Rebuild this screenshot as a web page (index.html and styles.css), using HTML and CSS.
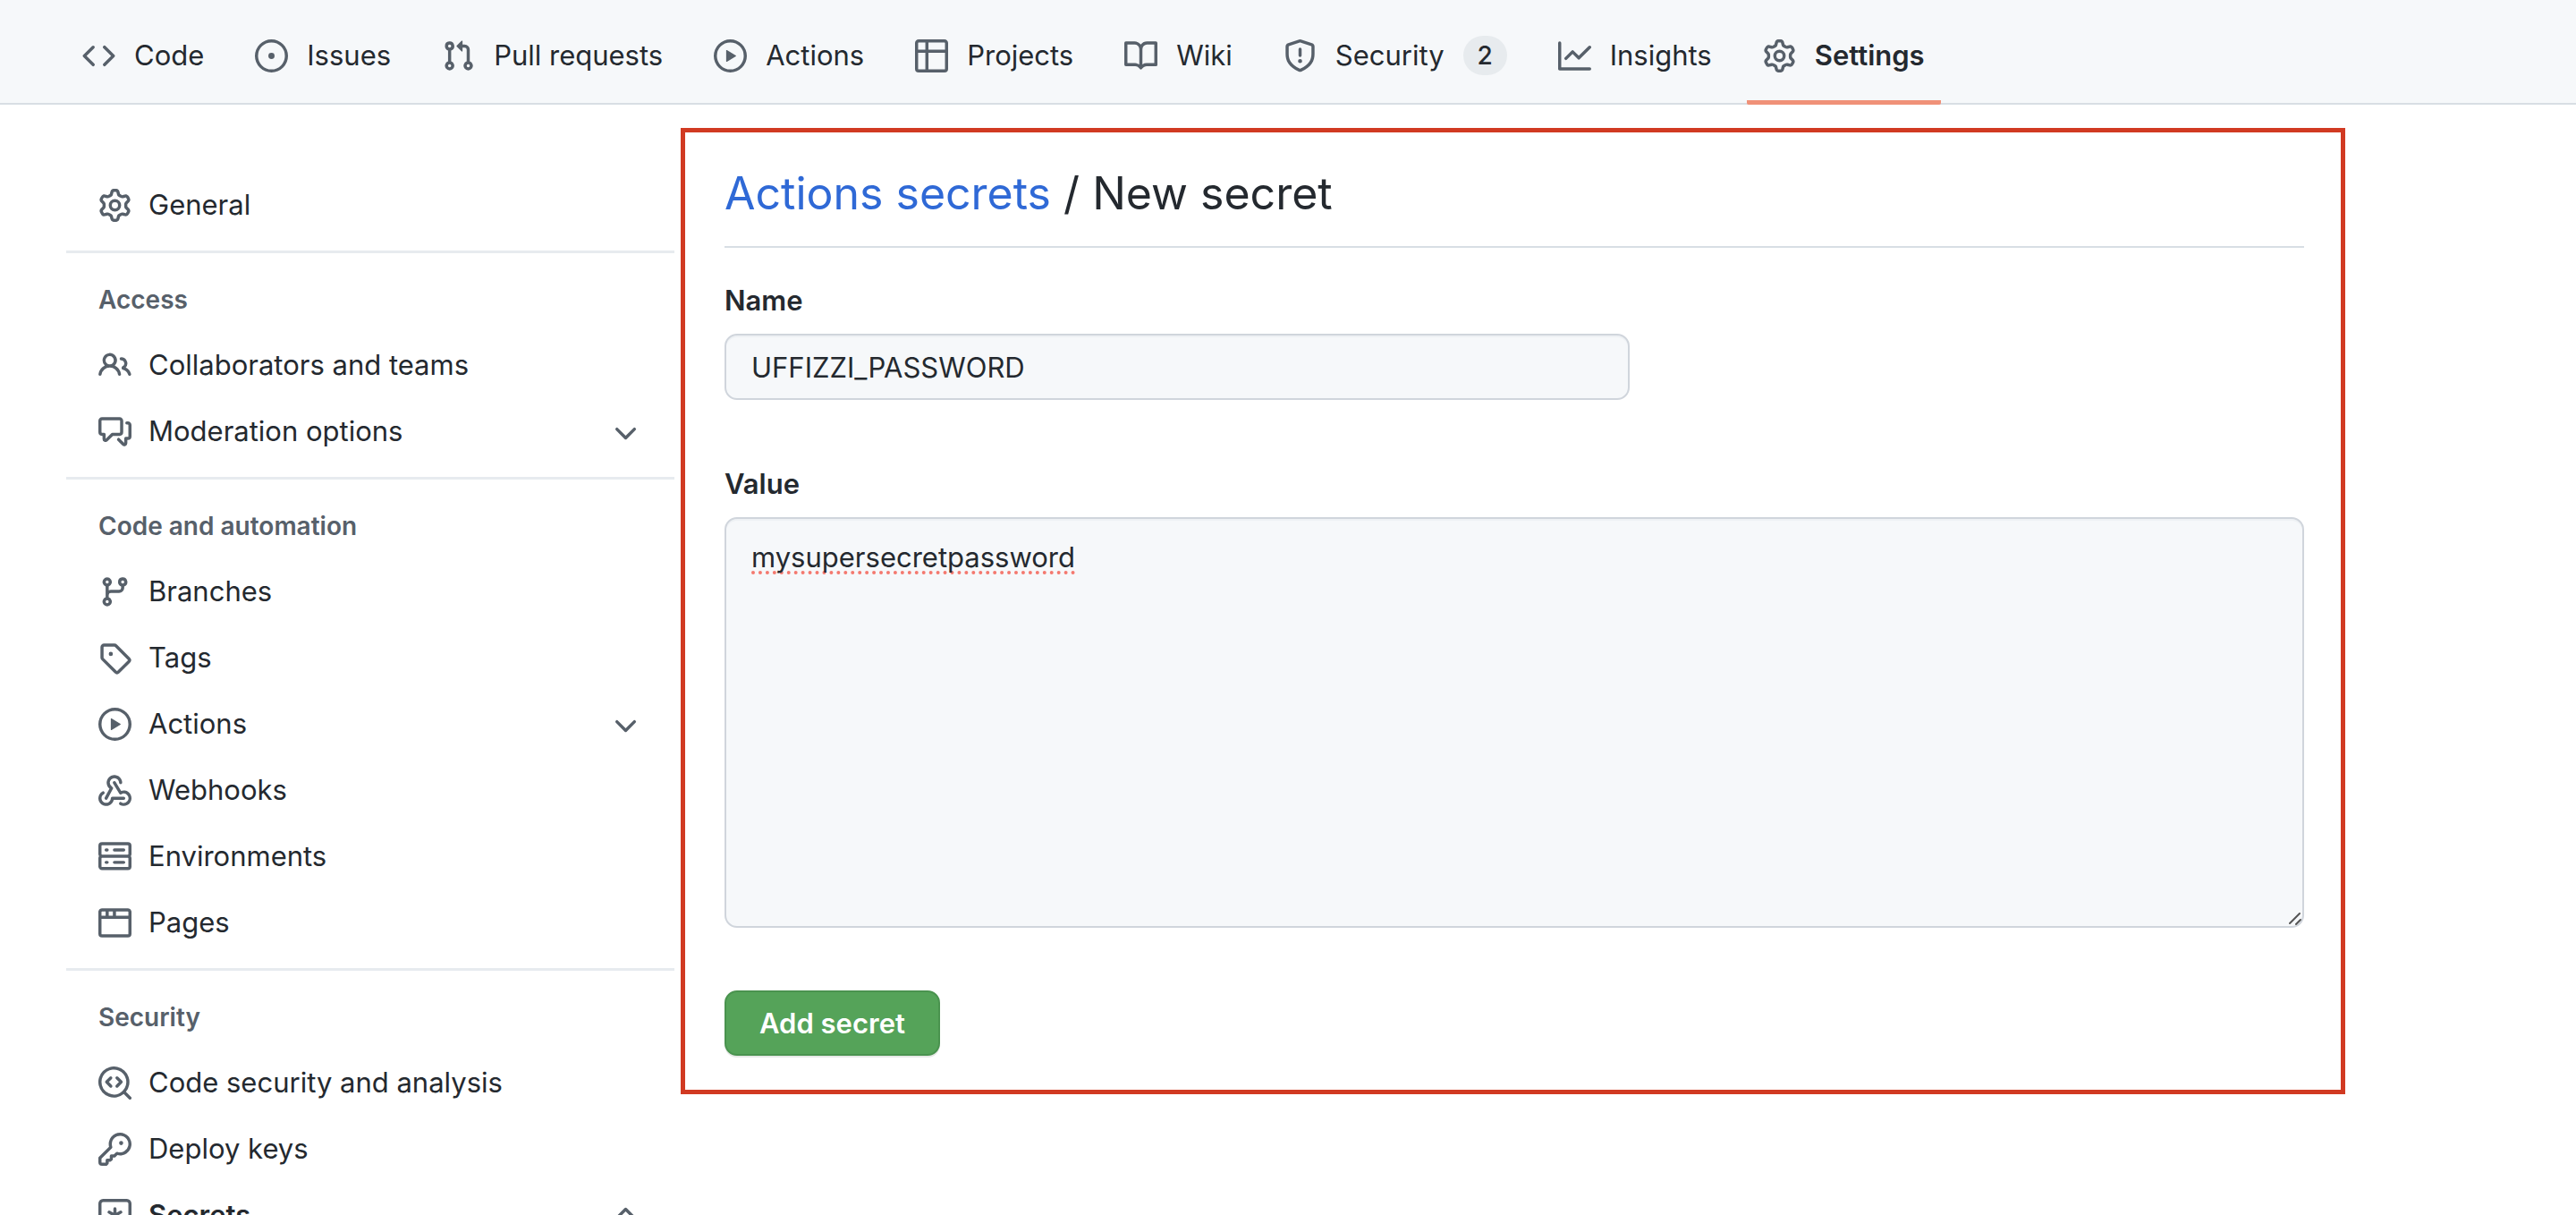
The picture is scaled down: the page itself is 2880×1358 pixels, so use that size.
FILE: index.html
```html
<!DOCTYPE html>
<html lang="en">
<head>
<meta charset="utf-8">
<title>New secret</title>
<link rel="stylesheet" href="styles.css">
</head>
<body>
<svg class="sprite" aria-hidden="true">
  <symbol id="i-code" viewBox="0 0 16 16"><path d="M4.72 3.22a.75.75 0 011.06 1.06L2.06 8l3.72 3.72a.75.75 0 11-1.06 1.06L.47 8.53a.75.75 0 010-1.06l4.25-4.25zm6.56 0a.75.75 0 10-1.06 1.06L13.94 8l-3.72 3.72a.75.75 0 101.06 1.06l4.25-4.25a.75.75 0 000-1.06l-4.25-4.25z"/></symbol>
  <symbol id="i-issue" viewBox="0 0 16 16"><path d="M8 9.5a1.5 1.5 0 100-3 1.5 1.5 0 000 3z"/><path d="M8 0a8 8 0 100 16A8 8 0 008 0zM1.5 8a6.5 6.5 0 1113 0 6.5 6.5 0 01-13 0z"/></symbol>
  <symbol id="i-pull" viewBox="0 0 16 16"><path d="M7.177 3.073L9.573.677A.25.25 0 0110 .854v4.792a.25.25 0 01-.427.177L7.177 3.427a.25.25 0 010-.354zM3.75 2.5a.75.75 0 100 1.5.75.75 0 000-1.5zm-2.25.75a2.25 2.25 0 113 2.122v5.256a2.251 2.251 0 11-1.5 0V5.372A2.25 2.25 0 011.5 3.25zM11 2.5h-1V4h1a1 1 0 011 1v5.628a2.251 2.251 0 101.5 0V5A2.5 2.5 0 0011 2.5zm1 10.25a.75.75 0 111.5 0 .75.75 0 01-1.5 0zM3.75 12a.75.75 0 100 1.5.75.75 0 000-1.5z"/></symbol>
  <symbol id="i-play" viewBox="0 0 16 16"><path d="M1.5 8a6.5 6.5 0 1113 0 6.5 6.5 0 01-13 0zM8 0a8 8 0 100 16A8 8 0 008 0zM6.379 5.227A.25.25 0 006 5.442v5.117a.25.25 0 00.379.214l4.264-2.559a.25.25 0 000-.428L6.379 5.227z"/></symbol>
  <symbol id="i-table" viewBox="0 0 16 16"><path d="M0 1.75C0 .784.784 0 1.75 0h12.5C15.216 0 16 .784 16 1.75v12.5A1.75 1.75 0 0 1 14.25 16H1.75A1.75 1.75 0 0 1 0 14.25ZM6.5 6.5v8h7.75a.25.25 0 0 0 .25-.25V6.5Zm8-1.5V1.75a.25.25 0 0 0-.25-.25H6.5V5Zm-13 1.5v7.75c0 .138.112.25.25.25H5v-8ZM5 5V1.5H1.75a.25.25 0 0 0-.25.25V5Z"/></symbol>
  <symbol id="i-book" viewBox="0 0 16 16"><path d="M0 1.75A.75.75 0 01.75 1h4.253c1.227 0 2.317.59 3 1.501A3.744 3.744 0 0111.006 1h4.245a.75.75 0 01.75.75v10.5a.75.75 0 01-.75.75h-4.507a2.25 2.25 0 00-1.591.659l-.622.621a.75.75 0 01-1.06 0l-.622-.621A2.25 2.25 0 005.258 13H.75a.75.75 0 01-.75-.75V1.75zm8.755 3a2.25 2.25 0 012.25-2.25H14.5v9h-3.757c-.71 0-1.4.201-1.992.572l.004-7.322zm-1.504 7.324l.004-5.073-.002-2.253A2.25 2.25 0 005.003 2.5H1.5v9h3.757a3.75 3.75 0 011.994.574z"/></symbol>
  <symbol id="i-shield" viewBox="0 0 16 16"><path d="M7.467.133a1.748 1.748 0 0 1 1.066 0l5.25 1.68A1.75 1.75 0 0 1 15 3.48V7c0 1.566-.32 3.182-1.303 4.682-.983 1.498-2.585 2.813-5.032 3.855a1.697 1.697 0 0 1-1.33 0c-2.447-1.042-4.049-2.357-5.032-3.855C1.32 10.182 1 8.566 1 7V3.48a1.75 1.75 0 0 1 1.217-1.667Zm.61 1.429a.25.25 0 0 0-.153 0l-5.25 1.68a.25.25 0 0 0-.174.238V7c0 1.358.275 2.666 1.057 3.86.784 1.194 2.121 2.34 4.366 3.297a.196.196 0 0 0 .154 0c2.245-.956 3.582-2.104 4.366-3.298C13.225 9.666 13.5 8.36 13.5 7V3.48a.251.251 0 0 0-.174-.237l-5.25-1.68ZM8.75 4.75v3a.75.75 0 0 1-1.5 0v-3a.75.75 0 0 1 1.5 0ZM9 10.5a1 1 0 1 1-2 0 1 1 0 0 1 2 0Z"/></symbol>
  <symbol id="i-graph" viewBox="0 0 16 16"><path d="M1.5 1.75a.75.75 0 00-1.5 0v12.5c0 .414.336.75.75.75h14.5a.75.75 0 000-1.5H1.5V1.75zm14.28 2.53a.75.75 0 00-1.06-1.06L10 7.94 7.53 5.47a.75.75 0 00-1.06 0L3.22 8.72a.75.75 0 001.06 1.06L7 7.06l2.47 2.47a.75.75 0 001.06 0l5.25-5.25z"/></symbol>
  <symbol id="i-gear" viewBox="0 0 16 16"><path d="M8 0a8.2 8.2 0 0 1 .701.031C9.444.095 9.99.645 10.16 1.29l.288 1.107c.018.066.079.158.212.224.231.114.454.243.668.386.123.082.233.09.299.071l1.103-.303c.644-.176 1.392.021 1.82.63.27.385.506.792.704 1.218.315.675.111 1.422-.364 1.891l-.814.806c-.049.048-.098.147-.088.294.016.257.016.515 0 .772-.01.147.038.246.088.294l.814.806c.475.469.679 1.216.364 1.891a7.977 7.977 0 0 1-.704 1.217c-.428.61-1.176.807-1.82.63l-1.102-.302c-.067-.019-.177-.011-.3.071a5.909 5.909 0 0 1-.668.386c-.133.066-.194.158-.211.224l-.29 1.106c-.168.646-.715 1.196-1.458 1.26a8.006 8.006 0 0 1-1.402 0c-.743-.064-1.289-.614-1.458-1.26l-.289-1.106c-.018-.066-.079-.158-.212-.224a5.738 5.738 0 0 1-.668-.386c-.123-.082-.233-.09-.299-.071l-1.103.303c-.644.176-1.392-.021-1.82-.63a8.12 8.12 0 0 1-.704-1.218c-.315-.675-.111-1.422.363-1.891l.815-.806c.05-.048.098-.147.088-.294a6.214 6.214 0 0 1 0-.772c.01-.147-.038-.246-.088-.294l-.815-.806C.635 6.045.431 5.298.746 4.623a7.92 7.92 0 0 1 .704-1.217c.428-.61 1.176-.807 1.82-.63l1.102.302c.067.019.177.011.3-.071.214-.143.437-.272.668-.386.133-.066.194-.158.211-.224l.29-1.106C6.009.645 6.556.095 7.299.03 7.53.01 7.764 0 8 0Zm-.571 1.525c-.036.003-.108.036-.137.146l-.289 1.105c-.147.561-.549.967-.998 1.189-.173.086-.34.183-.5.29-.417.278-.97.423-1.529.27l-1.103-.303c-.109-.03-.175.016-.195.045-.22.312-.412.644-.573.99-.014.031-.021.11.059.19l.815.806c.411.406.562.957.53 1.456a4.709 4.709 0 0 0 0 .582c.032.499-.119 1.05-.53 1.456l-.815.806c-.081.08-.073.159-.059.19.162.346.353.677.573.989.02.03.085.076.195.046l1.102-.303c.56-.153 1.113-.008 1.53.27.161.107.328.204.501.29.447.222.85.629.997 1.189l.289 1.105c.029.109.101.143.137.146a6.6 6.6 0 0 0 1.142 0c.036-.003.108-.036.137-.146l.289-1.105c.147-.561.549-.967.998-1.189.173-.086.34-.183.5-.29.417-.278.97-.423 1.529-.27l1.103.303c.109.029.175-.016.195-.045.22-.313.411-.644.573-.99.014-.031.021-.11-.059-.19l-.815-.806c-.411-.406-.562-.957-.53-1.456a4.709 4.709 0 0 0 0-.582c-.032-.499.119-1.05.53-1.456l.815-.806c.081-.08.073-.159.059-.19a6.464 6.464 0 0 0-.573-.989c-.02-.03-.085-.076-.195-.046l-1.102.303c-.56.153-1.113.008-1.53-.27a4.44 4.44 0 0 0-.501-.29c-.447-.222-.85-.629-.997-1.189l-.289-1.105c-.029-.11-.101-.143-.137-.146a6.6 6.6 0 0 0-1.142 0ZM11 8a3 3 0 1 1-6 0 3 3 0 0 1 6 0ZM9.5 8a1.5 1.5 0 1 0-3.001.001A1.5 1.5 0 0 0 9.5 8Z"/></symbol>
  <symbol id="i-people" viewBox="0 0 16 16"><path d="M2 5.5a3.5 3.5 0 1 1 5.898 2.549 5.508 5.508 0 0 1 3.034 4.084.75.75 0 1 1-1.482.235 4 4 0 0 0-7.9 0 .75.75 0 0 1-1.482-.236A5.507 5.507 0 0 1 3.102 8.05 3.493 3.493 0 0 1 2 5.5ZM11 4a3.001 3.001 0 0 1 2.22 5.018 5.01 5.01 0 0 1 2.56 3.012.749.749 0 0 1-.885.954.752.752 0 0 1-.549-.514 3.507 3.507 0 0 0-2.522-2.372.75.75 0 0 1-.574-.73v-.352a.75.75 0 0 1 .416-.672A1.5 1.5 0 0 0 11 5.5.75.75 0 0 1 11 4Zm-5.5-.5a2 2 0 1 0-.001 3.999A2 2 0 0 0 5.5 3.5Z"/></symbol>
  <symbol id="i-discussion" viewBox="0 0 16 16"><path d="M1.75 1h8.5c.966 0 1.75.784 1.75 1.75v5.5A1.75 1.75 0 0 1 10.25 10H7.061l-2.574 2.573A1.458 1.458 0 0 1 2 11.543V10h-.25A1.75 1.75 0 0 1 0 8.25v-5.5C0 1.784.784 1 1.75 1ZM1.5 2.75v5.5c0 .138.112.25.25.25h1a.75.75 0 0 1 .75.75v2.19l2.72-2.72a.749.749 0 0 1 .53-.22h3.5a.25.25 0 0 0 .25-.25v-5.5a.25.25 0 0 0-.25-.25h-8.5a.25.25 0 0 0-.25.25Zm13 2a.25.25 0 0 0-.25-.25h-.5a.75.75 0 0 1 0-1.5h.5c.966 0 1.75.784 1.75 1.75v5.5A1.75 1.75 0 0 1 14.25 12H14v1.543a1.458 1.458 0 0 1-2.487 1.03L9.22 12.28a.749.749 0 0 1 1.06-1.06l2.22 2.22v-2.19a.75.75 0 0 1 .75-.75h1a.25.25 0 0 0 .25-.25Z"/></symbol>
  <symbol id="i-branch" viewBox="0 0 16 16"><path d="M11.75 2.5a.75.75 0 100 1.5.75.75 0 000-1.5zm-2.25.75a2.25 2.25 0 113 2.122V6A2.5 2.5 0 0110 8.5H6a1 1 0 00-1 1v1.128a2.251 2.251 0 11-1.5 0V5.372a2.25 2.25 0 111.5 0v1.836A2.492 2.492 0 016 7h4a1 1 0 001-1v-.628A2.25 2.25 0 019.5 3.25zM4.25 12a.75.75 0 100 1.5.75.75 0 000-1.5zM3.5 3.25a.75.75 0 111.5 0 .75.75 0 01-1.5 0z"/></symbol>
  <symbol id="i-tag" viewBox="0 0 16 16"><path d="M2.5 7.775V2.75a.25.25 0 01.25-.25h5.025a.25.25 0 01.177.073l6.25 6.25a.25.25 0 010 .354l-5.025 5.025a.25.25 0 01-.354 0l-6.25-6.25a.25.25 0 01-.073-.177zm-1.5 0V2.75C1 1.784 1.784 1 2.75 1h5.025c.464 0 .91.184 1.238.513l6.25 6.25a1.75 1.75 0 010 2.474l-5.026 5.026a1.75 1.75 0 01-2.474 0l-6.25-6.25A1.75 1.75 0 011 7.775zM6 5a1 1 0 100 2 1 1 0 000-2z"/></symbol>
  <symbol id="i-webhook" viewBox="0 0 16 16"><path d="M5.5 4.25a2.25 2.25 0 014.5 0 .75.75 0 001.5 0 3.75 3.75 0 10-6.14 2.889l-2.272 4.258a.75.75 0 001.324.706L7 7.25a.75.75 0 00-.309-1.015A2.25 2.25 0 015.5 4.25z"/><path d="M7.364 3.607a.75.75 0 011.03.257l2.608 4.349a3.75 3.75 0 11-.628 6.785.75.75 0 01.752-1.299 2.25 2.25 0 10-.033-3.88.75.75 0 01-1.03-.256L7.107 4.636a.75.75 0 01.257-1.03z"/><path d="M2.9 8.776A.75.75 0 012.625 9.8 2.25 2.25 0 106 11.75a.75.75 0 01.75-.751h5.5a.75.75 0 010 1.5H7.425a3.75 3.75 0 11-5.55-3.998.75.75 0 011.024.274z"/></symbol>
  <symbol id="i-server" viewBox="0 0 16 16"><path d="M1.75 1A1.75 1.75 0 000 2.75v4c0 .372.116.717.314 1a1.742 1.742 0 00-.314 1v4c0 .966.784 1.75 1.75 1.75h12.5A1.75 1.75 0 0016 12.75v-4c0-.372-.116-.717-.314-1 .198-.283.314-.628.314-1v-4A1.75 1.75 0 0014.25 1H1.75zm0 7.5a.25.25 0 00-.25.25v4c0 .138.112.25.25.25h12.5a.25.25 0 00.25-.25v-4a.25.25 0 00-.25-.25H1.75zM1.5 2.75a.25.25 0 01.25-.25h12.5a.25.25 0 01.25.25v4a.25.25 0 01-.25.25H1.75a.25.25 0 01-.25-.25v-4zm5.5 2A.75.75 0 017.75 4h4.5a.75.75 0 010 1.5h-4.5A.75.75 0 017 4.75zM7.75 10a.75.75 0 000 1.5h4.5a.75.75 0 000-1.5h-4.5zM3 4.75A.75.75 0 013.75 4h.5a.75.75 0 010 1.5h-.5A.75.75 0 013 4.75zM3.75 10a.75.75 0 000 1.5h.5a.75.75 0 000-1.5h-.5z"/></symbol>
  <symbol id="i-browser" viewBox="0 0 16 16"><path d="M0 2.75C0 1.784.784 1 1.75 1h12.5c.966 0 1.75.784 1.75 1.75v10.5A1.75 1.75 0 0 1 14.25 15H1.75A1.75 1.75 0 0 1 0 13.25ZM14.5 6h-13v7.25c0 .138.112.25.25.25h12.5a.25.25 0 0 0 .25-.25Zm-6-3.5v2h6V2.75a.25.25 0 0 0-.25-.25ZM5 2.5v2h2v-2Zm-3.25 0a.25.25 0 0 0-.25.25V4.5h2v-2Z"/></symbol>
  <symbol id="i-codescan" viewBox="0 0 16 16"><path d="M8.47 4.97a.75.75 0 000 1.06L9.94 7.5 8.47 8.97a.75.75 0 101.06 1.06l2-2a.75.75 0 000-1.06l-2-2a.75.75 0 00-1.06 0zM6.53 6.03a.75.75 0 00-1.06-1.06l-2 2a.75.75 0 000 1.06l2 2a.75.75 0 101.06-1.06L5.06 7.5l1.47-1.47z"/><path d="M12.246 13.307a7.5 7.5 0 111.06-1.06l2.474 2.473a.75.75 0 11-1.06 1.06l-2.474-2.473zM1.5 7.5a6 6 0 1110.386 4.094.75.75 0 00-.292.293A6 6 0 011.5 7.5z"/></symbol>
  <symbol id="i-key" viewBox="0 0 16 16"><path d="M10.5 0a5.499 5.499 0 1 1-1.288 10.848l-.932.932a.749.749 0 0 1-.53.22H7v.75a.749.749 0 0 1-.22.53l-.5.5a.749.749 0 0 1-.53.22H5v.75a.749.749 0 0 1-.22.53l-.5.5a.749.749 0 0 1-.53.22h-2A1.75 1.75 0 0 1 0 14.25v-2c0-.199.079-.389.22-.53l4.932-4.932A5.5 5.5 0 0 1 10.5 0Zm-4 5.5c-.001.431.069.86.205 1.269a.75.75 0 0 1-.181.768L1.5 12.56v1.69c0 .138.112.25.25.25h1.69l.06-.06v-1.19a.75.75 0 0 1 .75-.75h1.19l.06-.06v-1.19a.75.75 0 0 1 .75-.75h1.19l1.023-1.025a.75.75 0 0 1 .768-.18A4 4 0 1 0 6.5 5.5ZM11 6a1 1 0 1 1 0-2 1 1 0 0 1 0 2Z"/></symbol>
  <symbol id="i-secret" viewBox="0 0 16 16"><g fill="none" stroke="currentColor" stroke-width="1.5" stroke-linecap="round"><rect x=".75" y=".75" width="14.5" height="14.5" rx="1.5"/><path d="M8 4.75v6.5M5.2 6.4l5.6 3.2M10.8 6.4L5.2 9.6"/></g></symbol>
  <symbol id="i-down" viewBox="0 0 16 16"><path d="M12.78 6.22a.75.75 0 010 1.06l-4.25 4.25a.75.75 0 01-1.06 0L3.22 7.28a.75.75 0 011.06-1.06L8 9.94l3.72-3.72a.75.75 0 011.06 0z"/></symbol>
  <symbol id="i-up" viewBox="0 0 16 16"><path d="M3.22 9.78a.75.75 0 010-1.06l4.25-4.25a.75.75 0 011.06 0l4.25 4.25a.75.75 0 01-1.06 1.06L8 6.06 4.28 9.78a.75.75 0 01-1.06 0z"/></symbol>
</svg>

<nav class="tabs" aria-label="Repository">
  <a class="tab" href="#"><svg class="icon"><use href="#i-code"/></svg>Code</a>
  <a class="tab" href="#"><svg class="icon"><use href="#i-issue"/></svg>Issues</a>
  <a class="tab" href="#"><svg class="icon"><use href="#i-pull"/></svg>Pull requests</a>
  <a class="tab" href="#"><svg class="icon"><use href="#i-play"/></svg>Actions</a>
  <a class="tab" href="#"><svg class="icon"><use href="#i-table"/></svg>Projects</a>
  <a class="tab" href="#"><svg class="icon"><use href="#i-book"/></svg>Wiki</a>
  <a class="tab" href="#"><svg class="icon"><use href="#i-shield"/></svg>Security<span class="counter">2</span></a>
  <a class="tab" href="#"><svg class="icon"><use href="#i-graph"/></svg>Insights</a>
  <a class="tab tab-current" href="#" aria-current="page"><svg class="icon"><use href="#i-gear"/></svg>Settings</a>
</nav>

<div class="layout">
  <nav class="sidebar" aria-label="Settings">
    <div class="group">
      <a class="item" href="#"><svg class="icon"><use href="#i-gear"/></svg>General</a>
    </div>
    <div class="group">
      <h2 class="group-title">Access</h2>
      <a class="item" href="#"><svg class="icon"><use href="#i-people"/></svg>Collaborators and teams</a>
      <button class="item" type="button"><svg class="icon"><use href="#i-discussion"/></svg>Moderation options<svg class="icon chevron"><use href="#i-down"/></svg></button>
    </div>
    <div class="group">
      <h2 class="group-title">Code and automation</h2>
      <a class="item" href="#"><svg class="icon"><use href="#i-branch"/></svg>Branches</a>
      <a class="item" href="#"><svg class="icon"><use href="#i-tag"/></svg>Tags</a>
      <button class="item" type="button"><svg class="icon"><use href="#i-play"/></svg>Actions<svg class="icon chevron"><use href="#i-down"/></svg></button>
      <a class="item" href="#"><svg class="icon"><use href="#i-webhook"/></svg>Webhooks</a>
      <a class="item" href="#"><svg class="icon"><use href="#i-server"/></svg>Environments</a>
      <a class="item" href="#"><svg class="icon"><use href="#i-browser"/></svg>Pages</a>
    </div>
    <div class="group">
      <h2 class="group-title">Security</h2>
      <a class="item" href="#"><svg class="icon"><use href="#i-codescan"/></svg>Code security and analysis</a>
      <a class="item" href="#"><svg class="icon"><use href="#i-key"/></svg>Deploy keys</a>
      <button class="item item-open" type="button"><svg class="icon"><use href="#i-secret"/></svg>Secrets<svg class="icon chevron"><use href="#i-up"/></svg></button>
    </div>
  </nav>

  <main class="panel">
    <h1 class="title"><a href="#">Actions secrets</a> / New secret</h1>
    <form class="form">
      <div class="field">
        <label class="label" for="name">Name</label>
        <input class="control name" id="name" type="text" value="UFFIZZI_PASSWORD">
      </div>
      <div class="field">
        <label class="label" for="value">Value</label>
        <textarea class="control value" id="value" spellcheck="false">mysupersecretpassword</textarea>
      </div>
      <button class="submit" type="button">Add secret</button>
    </form>
  </main>
</div>
</body>
</html>
```
FILE: styles.css
```css
* {
  box-sizing: border-box;
}

body {
  margin: 0;
  height: 100vh;
  overflow: hidden;
  background: #fff;
  color: #24292f;
  font: 31px/48px Inter, "Liberation Sans", sans-serif;
}

a {
  color: inherit;
  text-decoration: none;
}

button,
input,
textarea {
  font: inherit;
  color: inherit;
}

.sprite {
  display: none;
}

.icon {
  flex: none;
  width: 37px;
  height: 37px;
  fill: #57606a;
  color: #57606a;
  fill-rule: evenodd;
}

/* Repository tabs */
.tabs {
  display: flex;
  gap: 21px;
  padding-left: 74px;
  background: #f6f8fa;
  box-shadow: inset 0 -2px #d8dee4;
}

.tab {
  display: flex;
  align-items: center;
  gap: 21px;
  padding: 38px 18px 26px;
  border-bottom: 5px solid transparent;
  white-space: nowrap;
}

.tab-current {
  border-bottom-color: #f09178;
  border-radius: 2px;
  font-weight: 600;
}

.counter {
  min-width: 49px;
  border-radius: 22px;
  background: #e7ebee;
  font-size: 28px;
  font-weight: 500;
  line-height: 44px;
  text-align: center;
}

.layout {
  display: flex;
  align-items: flex-start;
  gap: 7px;
  padding: 26px 258px 0 74px;
}

/* Settings menu */
.sidebar {
  flex: none;
  width: 680px;
  padding-top: 33px;
}

.group {
  padding: 16px 0 14px;
}

.group + .group {
  border-top: 3px solid #e7ebef;
}

.group-title {
  margin: 0;
  padding: 0 36px;
  color: #57606a;
  font-size: 28px;
  font-weight: 600;
  line-height: 72px;
}

.item {
  display: flex;
  align-items: center;
  gap: 19px;
  width: 100%;
  height: 74px;
  padding: 0 36px;
  border: 0;
  background: none;
  text-align: left;
}

.item-open {
  font-weight: 600;
}

.chevron {
  margin-left: auto;
}

/* New secret form */
.panel {
  flex: 1;
  min-width: 0;
  padding: 32px 41px 38px 44px;
  border: 5px solid #d13a22;
}

.title {
  margin: 0 0 35px;
  padding-bottom: 23px;
  border-bottom: 2px solid #d8dee4;
  font-size: 50px;
  font-weight: 400;
  line-height: 72px;
}

.title a {
  color: #2f69d6;
}

.form {
  display: flex;
  flex-direction: column;
  align-items: flex-start;
}

.field {
  display: flex;
  flex-direction: column;
  align-items: flex-start;
  gap: 13px;
  width: 100%;
  margin-bottom: 70px;
}

.label {
  font-weight: 600;
}

.control {
  width: 100%;
  padding: 10px 28px;
  border: 2px solid #d0d5dc;
  border-radius: 14px;
  background: #f6f8fa;
  box-shadow: inset 0 2px #eef1f4;
  outline: 0;
}

.name {
  max-width: 1012px;
  height: 74px;
}

.value {
  display: block;
  height: 459px;
  padding-top: 19px;
  resize: vertical;
  text-decoration: underline dotted #f4796f 4px;
  text-decoration-skip-ink: none;
  text-underline-offset: 4px;
}

/* Two-stroke drag handle */
.value::-webkit-resizer {
  background: url("data:image/svg+xml,%3Csvg xmlns='http://www.w3.org/2000/svg' width='15' height='15'%3E%3Cpath d='M1 12L12 1M8 13l5-5' stroke='%23555' stroke-width='2' stroke-linecap='round'/%3E%3C/svg%3E") no-repeat;
}

.submit {
  height: 73px;
  padding: 0 37px;
  border: 2px solid #4a934f;
  border-radius: 14px;
  background: #55a359;
  box-shadow: 0 2px #e6e8e6;
  color: #fff;
  font-weight: 600;
}
```
